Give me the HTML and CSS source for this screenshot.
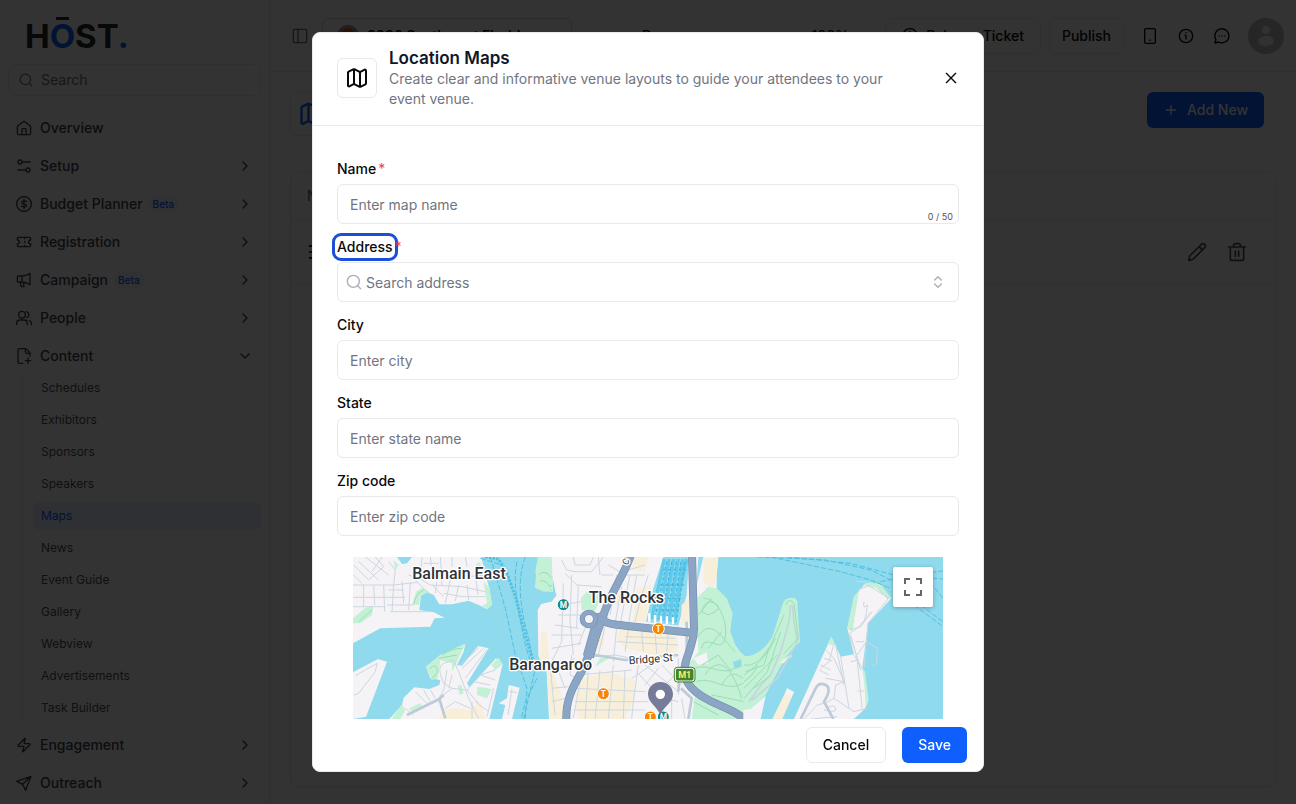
FILE: index.html
```html
<!DOCTYPE html>
<html lang="en">
<head>
    <meta charset="UTF-8">
    <meta name="viewport" content="width=device-width, initial-scale=1.0">
    <title>Location Maps</title>
    <link rel="stylesheet" href="styles.css">
</head>
<body>
    <!-- Icon sprite -->
    <svg class="sprite" aria-hidden="true">
        <symbol id="i-search" viewBox="0 0 24 24"><circle cx="11" cy="11" r="9"/><path d="m22 22-4.500-4.500"/></symbol>
        <symbol id="i-home" viewBox="0 0 24 24"><path d="M9 22v-8a1 1 0 0 1 1-1h4a1 1 0 0 1 1 1v8"/><path d="M2 10.500a2 2 0 0 1 .7-1.500l8-6.500a2 2 0 0 1 2.600 0l8 6.500a2 2 0 0 1 .7 1.500V20a2 2 0 0 1-2 2H4a2 2 0 0 1-2-2z"/></symbol>
        <symbol id="i-setup" viewBox="0 0 24 24"><circle cx="6" cy="6" r="3"/><path d="M9 6h12"/><circle cx="18" cy="18" r="3"/><path d="M3 18h12"/></symbol>
        <symbol id="i-dollar" viewBox="0 0 24 24"><circle cx="12" cy="12" r="11"/><path d="M16 8.500c-1-1.200-7-2-7.500 1-.4 3 7 2 7.300 5 .3 3-6.800 2.500-8 .5M12 5v14"/></symbol>
        <symbol id="i-ticket" viewBox="0 0 24 24"><path d="M2 9a3 3 0 0 1 0 6v2a2 2 0 0 0 2 2h16a2 2 0 0 0 2-2v-2a3 3 0 0 1 0-6V7a2 2 0 0 0-2-2H4a2 2 0 0 0-2 2zM13 5v2M13 17v2M13 11v2"/></symbol>
        <symbol id="i-mega" viewBox="0 0 24 24"><path d="M3 6h6c4 0 8-1.500 12-4v17c-4-2.500-8-4-12-4H3a1 1 0 0 1-1-1V7a1 1 0 0 1 1-1zM9 6v9M6 15l2 7h4l-1-6"/></symbol>
        <symbol id="i-users" viewBox="0 0 24 24"><path d="M17 22v-2a5 5 0 0 0-5-5H6a5 5 0 0 0-5 5v2"/><circle cx="9" cy="7" r="5"/><path d="M23 22v-2a5 5 0 0 0-3-4.500M16 2.300a5 5 0 0 1 0 9.400"/></symbol>
        <symbol id="i-file" viewBox="0 0 24 24"><path d="M10 23H5a2 2 0 0 1-2-2V3a2 2 0 0 1 2-2h10l6 6v5M14 1v5a2 2 0 0 0 2 2h5M14 19h8M18 15v8"/></symbol>
        <symbol id="i-bolt" viewBox="0 0 24 24"><path d="M4 14a1 1 0 0 1-.8-1.600l10-10.200a.5.5 0 0 1 .9.500L12 9a1 1 0 0 0 1 1h7a1 1 0 0 1 .8 1.600l-10 10.200a.5.5 0 0 1-.9-.5L12 15a1 1 0 0 0-1-1z"/></symbol>
        <symbol id="i-send" viewBox="0 0 24 24"><path d="M22.500 2 1 9.500l9 4.500 4.500 9zM22.500 2 10 14"/></symbol>
        <symbol id="i-right" viewBox="0 0 24 24"><path d="m9 18 6-6-6-6"/></symbol>
        <symbol id="i-down" viewBox="0 0 24 24"><path d="m6 9 6 6 6-6"/></symbol>
        <symbol id="i-updown" viewBox="0 0 24 24"><path d="m7 15 5 5 5-5M7 9l5-5 5 5"/></symbol>
        <symbol id="i-panel" viewBox="0 0 24 24"><rect x="2" y="2" width="20" height="20" rx="2"/><path d="M9 2v20"/></symbol>
        <symbol id="i-map" viewBox="0 0 24 24"><path d="M14.100 5.600a2 2 0 0 0 1.800 0l3.700-1.900A1 1 0 0 1 21 4.600v12.800a1 1 0 0 1-.6.900l-4.500 2.300a2 2 0 0 1-1.800 0l-4.200-2.200a2 2 0 0 0-1.800 0l-3.700 1.900A1 1 0 0 1 3 19.400V6.600a1 1 0 0 1 .6-.9l4.500-2.300a2 2 0 0 1 1.800 0zM15 5.800v15M9 3.200v15"/></symbol>
        <symbol id="i-plus" viewBox="0 0 24 24"><path d="M5 12h14M12 5v14"/></symbol>
        <symbol id="i-phone" viewBox="0 0 24 24"><rect x="4" y="1" width="16" height="22" rx="2"/><path d="M12 18v1"/></symbol>
        <symbol id="i-info" viewBox="0 0 24 24"><circle cx="12" cy="12" r="10"/><path d="M10.500 11H12v5.500M12 7v.5"/></symbol>
        <symbol id="i-chat" viewBox="0 0 24 24"><path d="M7 21a10.500 10.500 0 1 0-4.200-4L1.500 22.500zM8 12h.1M12 12h.1M16 12h.1"/></symbol>
        <symbol id="i-pencil" viewBox="0 0 24 24"><path d="M21.200 6.800a1 1 0 0 0-4-4L3.800 16.200a2 2 0 0 0-.5.800L2 21.400a.5.5 0 0 0 .6.600L7 20.700a2 2 0 0 0 .8-.5zM14.500 5.500l4 4"/></symbol>
        <symbol id="i-trash" viewBox="0 0 24 24"><path d="M2 6h20M4 6v14a2 2 0 0 0 2 2h12a2 2 0 0 0 2-2V6M8 6V4a2 2 0 0 1 2-2h4a2 2 0 0 1 2 2v2M10 11v6M14 11v6"/></symbol>
        <symbol id="i-lines" viewBox="0 0 24 24"><path d="M3 5h18M3 12h18M3 19h18"/></symbol>
        <symbol id="i-close" viewBox="0 0 24 24"><path d="M5 5l14 14M19 5 5 19"/></symbol>
    </svg>

    <div class="app">
        <aside class="sidebar">
            <a class="logo" href="#">H<span class="logo-o">O</span>ST<span class="logo-dot">.</span></a>
            <div class="side-search">
                <svg class="icon"><use href="#i-search"/></svg>
                <input type="search" placeholder="Search" aria-label="Search">
            </div>
            <nav class="nav">
                <a class="nav-item" href="#"><svg class="icon"><use href="#i-home"/></svg>Overview</a>
                <a class="nav-item" href="#"><svg class="icon"><use href="#i-setup"/></svg>Setup<svg class="icon arrow"><use href="#i-right"/></svg></a>
                <a class="nav-item" href="#"><svg class="icon"><use href="#i-dollar"/></svg>Budget Planner<span class="beta">Beta</span><svg class="icon arrow"><use href="#i-right"/></svg></a>
                <a class="nav-item" href="#"><svg class="icon"><use href="#i-ticket"/></svg>Registration<svg class="icon arrow"><use href="#i-right"/></svg></a>
                <a class="nav-item" href="#"><svg class="icon"><use href="#i-mega"/></svg>Campaign<span class="beta">Beta</span><svg class="icon arrow"><use href="#i-right"/></svg></a>
                <a class="nav-item" href="#"><svg class="icon"><use href="#i-users"/></svg>People<svg class="icon arrow"><use href="#i-right"/></svg></a>
                <a class="nav-item" href="#"><svg class="icon"><use href="#i-file"/></svg>Content<svg class="icon arrow"><use href="#i-down"/></svg></a>
                <div class="subnav">
                    <a href="#">Schedules</a>
                    <a href="#">Exhibitors</a>
                    <a href="#">Sponsors</a>
                    <a href="#">Speakers</a>
                    <a href="#" class="active">Maps</a>
                    <a href="#">News</a>
                    <a href="#">Event Guide</a>
                    <a href="#">Gallery</a>
                    <a href="#">Webview</a>
                    <a href="#">Advertisements</a>
                    <a href="#">Task Builder</a>
                </div>
                <a class="nav-item" href="#"><svg class="icon"><use href="#i-bolt"/></svg>Engagement<svg class="icon arrow"><use href="#i-right"/></svg></a>
                <a class="nav-item" href="#"><svg class="icon"><use href="#i-send"/></svg>Outreach<svg class="icon arrow"><use href="#i-right"/></svg></a>
            </nav>
        </aside>

        <div class="main">
            <header class="topbar">
                <button class="icon-btn muted" aria-label="Toggle sidebar"><svg class="icon"><use href="#i-panel"/></svg></button>
                <button class="event-btn"><span class="event-logo"></span>2026 Southwest Florida</button>
                <div class="progress"><span>Progress</span><span>100%</span></div>
                <button class="btn ticket-btn"><svg class="icon"><use href="#i-dollar"/></svg>Release Ticket</button>
                <button class="btn publish-btn">Publish</button>
                <div class="top-icons">
                    <button class="icon-btn" aria-label="Mobile preview"><svg class="icon"><use href="#i-phone"/></svg></button>
                    <button class="icon-btn" aria-label="Info"><svg class="icon"><use href="#i-info"/></svg></button>
                    <button class="icon-btn" aria-label="Chat"><svg class="icon"><use href="#i-chat"/></svg></button>
                </div>
                <button class="avatar" aria-label="Account">
                    <svg viewBox="0 0 36 36"><circle cx="18" cy="12" r="4"/><ellipse cx="18" cy="23" rx="8" ry="5"/></svg>
                </button>
            </header>

            <main class="content">
                <div class="page-head">
                    <span class="page-icon"><svg class="icon"><use href="#i-map"/></svg></span>
                    <button class="btn btn-primary add-btn"><svg class="icon"><use href="#i-plus"/></svg>Add New</button>
                </div>
                <div class="panel">
                    <table>
                        <thead>
                            <tr><th>Name</th><th></th></tr>
                        </thead>
                        <tbody>
                            <tr>
                                <td><svg class="icon"><use href="#i-lines"/></svg></td>
                                <td>
                                    <div class="actions">
                                        <button class="icon-btn" aria-label="Edit"><svg class="icon"><use href="#i-pencil"/></svg></button>
                                        <button class="icon-btn" aria-label="Delete"><svg class="icon"><use href="#i-trash"/></svg></button>
                                    </div>
                                </td>
                            </tr>
                        </tbody>
                    </table>
                </div>
            </main>
        </div>
    </div>

    <div class="overlay">
        <div class="modal" role="dialog" aria-modal="true" aria-labelledby="modalTitle">
            <div class="modal-header">
                <span class="modal-icon"><svg class="icon"><use href="#i-map"/></svg></span>
                <div class="modal-text">
                    <h2 id="modalTitle">Location Maps</h2>
                    <p>Create clear and informative venue layouts to guide your attendees to your event venue.</p>
                </div>
                <button class="icon-btn" aria-label="Close"><svg class="icon"><use href="#i-close"/></svg></button>
            </div>

            <form class="modal-body" id="mapForm">
                <div class="field">
                    <div class="label-row"><label for="name">Name</label><span class="required">*</span></div>
                    <div class="control">
                        <input type="text" id="name" placeholder="Enter map name" maxlength="50">
                        <span class="counter">0 / 50</span>
                    </div>
                </div>
                <div class="field">
                    <div class="label-row"><label for="address" class="focused">Address</label><span class="required">*</span></div>
                    <div class="control search">
                        <svg class="icon"><use href="#i-search"/></svg>
                        <input type="text" id="address" placeholder="Search address">
                        <svg class="icon"><use href="#i-updown"/></svg>
                    </div>
                </div>
                <div class="field">
                    <div class="label-row"><label for="city">City</label></div>
                    <div class="control"><input type="text" id="city" placeholder="Enter city"></div>
                </div>
                <div class="field">
                    <div class="label-row"><label for="state">State</label></div>
                    <div class="control"><input type="text" id="state" placeholder="Enter state name"></div>
                </div>
                <div class="field">
                    <div class="label-row"><label for="zip">Zip code</label></div>
                    <div class="control"><input type="text" id="zip" placeholder="Enter zip code"></div>
                </div>

                <div class="map">
                    <svg class="map-canvas" viewBox="0 0 1770 486" preserveAspectRatio="xMidYMin slice" role="img" aria-label="Map of Sydney Harbour">
                        <rect width="1770" height="486" fill="#90daee"/>

                        <!-- Balmain and Pyrmont -->
                        <g transform="translate(-3 -6)">
                            <g class="land">
                                <path d="M3 6H135L150 27 165 25 180 6H388L400 60 412 100 420 150 405 163 385 152 350 137 300 148H262L245 120 225 110 207 122 202 165 245 172 278 188 248 190 235 215 85 220 3 265Z"/>
                                <path d="M3 352 78 312 105 320 42 485 3 492Z"/>
                                <path d="M112 492 150 450 155 428 187 397 232 402 262 390 265 375 235 370 222 335 265 300 340 266 335 290 315 330 330 332 378 273 410 280 345 385 352 397 432 310 452 328 412 492Z"/>
                                <path d="M450 492 460 450 440 445 465 430 470 390 503 398 480 492Z"/>
                            </g>
                            <g class="park">
                                <path d="M3 190 40 158 64 154 60 180 25 205 3 205Z"/>
                                <path d="M182 148 192 110 212 98 230 110 207 122 200 150Z"/>
                                <path d="M372 28 385 20 388 45 374 42ZM395 80 412 100 420 150 405 163 390 152 405 145Z"/>
                                <path d="M222 335 265 300 340 266 320 310 300 350 300 325 265 315 258 370 240 375Z"/>
                                <path d="M118 492 150 448 160 465 145 492ZM172 460 205 444 210 455 180 470ZM376 395 420 402 405 430 375 420ZM418 330 440 308 452 328 430 345ZM318 392 328 390 335 415 322 420Z"/>
                                <path d="M553 30 565 6H603V112L575 110 548 98 555 72 550 50Z"/>
                                <path d="M125 15 140 30 130 45Z"/>
                            </g>
                            <path class="sand" d="M270 470 300 458 350 465 385 440 400 492H262Z"/>
                            <g class="street">
                                <path d="M5 30 50 75 95 35 70 6M20 20 80 75M40 6 110 60M3 90H125L195 82M35 90V155M65 90 68 150M95 90 98 170M125 88 120 170M3 155H100M3 127H160M105 150H185M115 170H240M150 80 155 145M175 82 170 165M110 105H155M110 20 130 45 125 90M60 50 90 6M5 60 30 85"/>
                                <path d="M170 60 210 75 235 90 330 95 400 110M210 6 205 60M205 40 180 75M235 6 240 50 265 60M265 6 270 90M295 75 280 145M320 90 310 138M255 80 250 115M345 90 350 135M370 60 378 120M215 25H260M180 65 235 120M275 115 330 125 400 125M340 6 345 35M240 90 275 125M300 6V35M345 65 400 60"/>
                                <path d="M5 420 20 415 70 350 75 325 10 362"/>
                                <path d="M330 340 395 280M325 330 380 278M340 370 405 283M275 325C255 335 265 360 275 385L300 400M275 325 305 315 320 350 350 430 380 492M285 345 275 405 260 430M260 430 300 400 345 405 370 435 380 445M300 360 290 400M345 405 385 360 430 345M370 440 410 470M385 360 430 375M235 405 250 430M190 410 225 445M160 460 185 480M215 405 235 440M425 400 405 485M470 410 495 412M480 400 468 480M365 380 415 390M280 460 310 440 355 460M360 440V492"/>
                            </g>
                            <path class="way" d="M165 480 262 432 280 490M262 432 275 420"/>
                            <g class="park-path">
                                <path d="M562 50Q555 80 575 95T600 105M570 15Q558 45 575 75T600 90M585 20Q570 45 592 70M185 148Q190 115 215 105M20 200 60 165M235 340Q250 325 255 340T240 370M270 300Q300 280 330 280M260 310 315 300"/>
                            </g>
                            <g class="ferry">
                                <path d="M415 6 460 160 490 300 525 400 520 492M495 20C480 80 500 180 520 270L535 320M520 6C490 80 510 180 530 250L545 330M555 370 520 440 508 492M548 350 515 492M385 10 450 30 480 90"/>
                                <path class="ferry-wide" d="M400 6 440 12 465 55 492 130 520 240 548 335"/>
                            </g>
                        </g>

                        <!-- City and The Rocks -->
                        <g transform="translate(576 -6)">
                            <path class="land" d="M120 6H355L325 100 303 200 400 212 425 120 432 6H600V492H12L5 350-8 335-20 300-22 165-12 148 20 138 35 120 25 75 40 25 60 6Z"/>
                            <path class="land" d="M20 6H130V130H35L22 60Z"/>
                            <path class="park" d="M-22 6H15L22 70 10 100 24 112-10 100-30 95ZM108 130 125 110 150 108 165 130 150 170 110 165ZM150 335 165 310 200 305Z"/>
                            <g class="sand">
                                <path d="M-12 230 5 230 15 330 50 420 60 492H15L5 350-15 320ZM275 100 320 90 300 200H262ZM215 110 240 105 230 150 210 150ZM225 215 335 225 400 235 395 290 330 300 240 280 215 250ZM110 370 190 350 270 375 265 440 240 492H100L90 430ZM155 250 180 230 175 270 155 290ZM265 6 310 6 300 50 262 45ZM410 150 432 130 430 210H408Z"/>
                            </g>
                            <path d="M460 6H600V310L570 270 555 230 560 180 540 130 515 105 515 60 520 6 475 6 455 90Z" fill="#90daee"/>
                            <path class="park" d="M455 130 490 95 515 100 545 130 563 175 555 230 575 280 600 303V492H440L450 420 425 370 430 330 460 290Z"/>
                            <path class="land" d="M445 310 485 292 490 325 460 330Z"/>
                            <path class="sand" d="M475 12 520 6 513 80 500 100 475 80Z"/>
                            <path d="M-20 120Q5 100 35 118L20 140-12 145Z" fill="#90daee"/>
                            <path d="M563 322 588 312 590 335 570 342Z" fill="#90daee"/>
                            <g class="street">
                                <path d="M50 15 65 45 90 50H140L175 6M85 6 90 30H135L145 6M60 55 95 90 170 95M55 85 50 260 10 340M80 60 75 200 85 300M100 90 95 220M170 60H205M40 180H110M30 210 100 220M20 240H110M50 150 110 140M190 30 240 60 300 60M195 120 185 200M215 60 195 180M230 95 210 205M255 60 225 210M275 60 250 210M160 6 165 60M300 30 250 45M310 60 290 120 270 200M20 280 110 265"/>
                                <path d="M120 220 100 270M180 215 160 300M215 215 205 320M250 225 240 290M290 225 295 290M330 230 335 295M370 230 365 290M215 260 400 270M240 245 390 250M145 305 210 300 260 310M80 300 75 360 95 370M15 330 30 480M30 320 60 400M0 350 90 310M20 400 70 395M20 440 60 430"/>
                                <path d="M110 330 105 380 85 490M130 345 120 492M165 345 150 492M205 330 190 492M240 345 235 492M100 360 260 345M95 400 300 410M90 440H310M85 465H300M280 330 265 440 260 492M260 370 320 330M275 350 330 410M300 330 400 410M340 410 400 350M380 420V492M400 310 400 420M410 430 420 492M350 330 410 390M340 340 300 390M320 420 400 440"/>
                            </g>
                            <path class="way" d="M150 300 240 315 400 300M400 410 405 350M408 400 440 430 430 492M425 300V200"/>
                            <g class="park-path">
                                <path d="M475 130C520 130 550 200 540 250S480 230 470 280M460 180 500 130M455 250C500 180 530 250 570 290M450 340C500 320 540 380 590 320M455 380C500 360 550 420 600 380M480 360C520 300 560 330 590 430M470 330 520 300 560 350M500 420 600 440M530 390C560 340 575 360 595 370M470 170Q480 130 510 145T490 180ZM490 280 530 230M-20 60Q0 40 20 70M-15 80Q0 70 15 95M445 440 520 480"/>
                            </g>
                            <path class="wharf" d="M358 12 320 192M372 12 340 195M386 12 355 198M400 12 372 200M414 12 388 205M426 12 400 120"/>
                            <path class="wharf-line" d="M365 20 330 190M380 20 350 190M394 20 365 195M408 20 380 200M420 20 394 200M352 45H425M345 90H418M335 130H408M330 165H400"/>
                            <path d="M313 175V200M330 180V203M348 182V205M366 184V207M384 187V208" stroke="#fff" stroke-width="7" fill="none"/>
                            <g class="highway edge">
                                <path d="M258-2C240 60 195 110 172 190L140 280 110 350C80 400 62 440 64 495"/>
                                <path d="M132 192 165 185C185 210 200 207 240 212L440 233"/>
                                <path d="M441 0 447 220C447 280 410 320 420 360 425 400 470 425 500 440S580 470 598 495"/>
                            </g>
                            <path d="M165 180 130 305" stroke="#7690b4" stroke-width="34"/>
                            <g class="highway">
                                <path d="M258-2C240 60 195 110 172 190L140 280 110 350C80 400 62 440 64 495"/>
                                <path d="M132 192 165 185C185 210 200 207 240 212L440 233"/>
                                <path d="M441 0 447 220C447 280 410 320 420 360 425 400 470 425 500 440S580 470 598 495"/>
                            </g>
                            <path d="M165 180 130 305" stroke="#8ba5c5" stroke-width="30"/>
                            <circle cx="132" cy="192" r="20" fill="#f5f3f5" stroke="#7690b4" stroke-width="16"/>
                            <circle cx="132" cy="192" r="20" fill="none" stroke="#8ba5c5" stroke-width="12"/>
                        </g>

                        <!-- Botanic Garden and Potts Point -->
                        <g transform="translate(1173 -6)">
                            <path class="park" d="M-2 303C40 308 70 270 85 245L115 150Q120 128 142 128T160 150L168 260 125 305 85 380 65 420 20 465-2 465Z"/>
                            <path class="land" d="M-2 465 20 462 65 422 50 492H-2ZM150 492 262 245 290 305 330 298 310 220 330 125 365 85 405 88 442 130 372 205 355 340 373 430C370 465 345 475 330 492Z"/>
                            <path class="sand" d="M105 325 135 300 145 302 118 325ZM85 492 130 400 150 412 115 492Z"/>
                            <path class="land" d="M123 415 130 400 150 412 142 425Z"/>
                            <path class="park" d="M310 220 330 125 345 110 338 150 325 230ZM355 90 375 82 410 88 442 130 432 132 400 100ZM262 245 275 270 250 268ZM355 340 363 350 373 430 365 460 362 400Z"/>
                            <g class="street">
                                <path d="M245 285 270 310 300 380 275 390 270 430 330 470 370 460M240 310 265 318M230 330 260 345M225 345 255 360M290 305 315 460M340 320 355 465M330 300 355 340M275 270 300 390M320 320 345 315M340 408H360M335 260H360M370 255 340 300M312 240 345 215 385 170M315 225 350 215 380 172M360 140Q355 165 370 150 365 200 355 205M400 100 432 132 372 205 360 340M340 105 375 92 435 130M320 240 340 310M245 370 300 380M200 492 280 485M270 430Q250 445 220 450L180 492M250 460Q270 445 275 460T240 465M270 265 255 320 230 340M315 235 332 285 350 345"/>
                                <path d="M370 262 400 280 398 325 388 332M335 80H370"/>
                            </g>
                            <path class="way" d="M170 492 215 400Q225 380 245 390T240 440L268 492"/>
                            <path class="boulevard" d="M15 440 55 385 80 360 110 290 135 200 140 150M25 435 100 370 160 260 150 200 145 150"/>
                            <path class="park-path" d="M125 150Q135 125 150 145L163 250 120 295M0 330Q40 340 80 270L120 180M0 360Q60 320 95 250M0 400Q60 340 100 300M0 430 70 350 110 230M5 350 60 330 75 280M0 380Q30 360 40 330M30 400 80 360"/>
                            <path class="ferry" d="M40 6 240 14 380 45 450 80M80 6 290 50 380 75 440 100M130 6 320 25 450 60 597 72M410 80 500 60 597 48M510 150 597 215M530 150 597 200M545 65 597 130"/>
                        </g>

                        <!-- Labels and markers -->
                        <g class="place" text-anchor="middle">
                            <text x="318" y="66">Balmain East</text>
                            <text x="820" y="138">The Rocks</text>
                            <text x="593" y="339">Barangaroo</text>
                        </g>
                        <text class="street-name" x="894" y="317" text-anchor="middle" transform="rotate(-4 894 317)">Bridge St</text>
                        <text class="street-name road-name" x="822" y="26" transform="rotate(-60 822 26)">C</text>
                        <g class="marker" text-anchor="middle">
                            <g fill="#12868c"><circle cx="631" cy="143" r="18"/><circle cx="931" cy="480" r="18"/></g>
                            <g fill="#f98500"><circle cx="916" cy="215" r="18"/><circle cx="751" cy="410" r="18"/><circle cx="892" cy="480" r="18"/></g>
                            <g class="marker-text"><text x="631" y="152">M</text><text x="931" y="488">M</text><text x="916" y="224">T</text><text x="751" y="419">T</text><text x="892" y="488">T</text></g>
                        </g>
                        <rect x="967" y="334" width="56" height="38" rx="7" fill="#438429" stroke="#fff" stroke-width="3"/>
                        <rect x="964" y="331" width="62" height="44" rx="9" fill="none" stroke="#438429" stroke-width="3"/>
                        <text class="shield" x="995" y="363" text-anchor="middle">M1</text>
                        <path d="M922 375C899 375 885 392 885 412 885 438 912 448 922 474 932 448 960 438 960 412 960 392 945 375 922 375Z" fill="#757b98"/>
                        <circle cx="922" cy="412" r="14" fill="#fff"/>
                    </svg>
                    <button type="button" class="fullscreen" aria-label="Toggle fullscreen view">
                        <svg viewBox="0 0 18 18"><path d="M1 6V1h5M12 1h5v5M17 12v5h-5M6 17H1v-5"/></svg>
                    </button>
                </div>
            </form>

            <div class="modal-footer">
                <button class="btn" type="button">Cancel</button>
                <button class="btn btn-primary" type="submit" form="mapForm">Save</button>
            </div>
        </div>
    </div>
</body>
</html>
```
FILE: styles.css
```css
* {
    margin: 0;
    padding: 0;
    box-sizing: border-box;
}

body {
    font-family: Inter, "Liberation Sans", sans-serif;
    font-size: 14px;
    line-height: 20px;
    color: #09090b;
    background: #fff;
    height: 100vh;
    overflow: hidden;
}

a {
    color: inherit;
    text-decoration: none;
}

button,
input {
    font: inherit;
    color: inherit;
}

button {
    background: none;
    border: none;
    cursor: pointer;
}

.sprite {
    display: none;
}

.icon {
    width: 16px;
    height: 16px;
    flex-shrink: 0;
    fill: none;
    stroke: currentColor;
    stroke-width: 2;
    stroke-linecap: round;
    stroke-linejoin: round;
}

.icon-btn {
    display: flex;
    align-items: center;
    justify-content: center;
}

.btn {
    display: flex;
    align-items: center;
    justify-content: center;
    gap: 8px;
    height: 36px;
    padding: 0 16px;
    border: 1px solid #e8e9ec;
    border-radius: 6px;
    font-weight: 500;
    white-space: nowrap;
}

.btn-primary {
    border: none;
    background: #0f5fff;
    color: #fff;
}

.app {
    display: flex;
    height: 100vh;
}

/* Sidebar */
.sidebar {
    width: 270px;
    flex-shrink: 0;
    padding: 0 8px;
    border-right: 1px solid #ececee;
    overflow: hidden;
}

.logo {
    display: block;
    height: 64px;
    padding: 16px 17px;
    font-size: 33px;
    line-height: 40px;
    font-weight: 700;
    color: #26282c;
}

.logo-o {
    position: relative;
    color: #0f5fff;
}

/* macron over the O */
.logo-o::before {
    content: "";
    position: absolute;
    top: 1px;
    left: 6px;
    width: 13px;
    height: 3px;
    background: #26282c;
}

.logo-dot {
    color: #0f5fff;
}

.side-search {
    display: flex;
    align-items: center;
    gap: 8px;
    height: 32px;
    padding: 0 10px;
    border: 1px solid #ececee;
    border-radius: 6px;
    color: #71717a;
}

.side-search .icon {
    width: 14px;
    height: 14px;
}

.side-search input {
    flex: 1;
    min-width: 0;
    border: none;
    outline: none;
    background: none;
}

::placeholder {
    color: #71757f;
    opacity: 1;
}

.nav {
    margin-top: 13px;
}

.nav-item {
    display: flex;
    align-items: center;
    gap: 5px;
    height: 38px;
    padding: 0 8px;
    color: #3f4450;
    font-weight: 500;
}

.nav-item .icon:first-child {
    margin-right: 3px;
}

.nav-item .arrow {
    margin-left: auto;
}

.beta {
    padding: 0 5px;
    border-radius: 8px;
    background: #eff4ff;
    color: #0f5fff;
    font-size: 10px;
    line-height: 16px;
}

.subnav {
    margin: -1px 0 1px 14px;
    padding-left: 10px;
    border-left: 1px solid #ececee;
}

.subnav a {
    display: block;
    padding: 0 8px;
    margin-bottom: 4px;
    border-radius: 6px;
    font-size: 12px;
    line-height: 28px;
    color: #52525b;
}

.subnav a.active {
    background: #e4edff;
    color: #0f5fff;
}

/* Top bar */
.main {
    flex: 1;
    min-width: 0;
    display: flex;
    flex-direction: column;
}

.topbar {
    display: flex;
    align-items: center;
    gap: 8px;
    height: 72px;
    padding: 0 12px 0 22px;
    border-bottom: 1px solid #ececee;
}

.topbar .muted {
    color: #71717a;
}

.event-btn {
    display: flex;
    align-items: center;
    gap: 8px;
    width: 250px;
    height: 36px;
    margin-left: 6px;
    padding: 0 14px;
    border: 1px solid #d4d4d8;
    border-radius: 6px;
    font-weight: 600;
}

.event-logo {
    width: 22px;
    height: 22px;
    border: 3px solid #a1a1aa;
    border-radius: 50%;
    background: #e8532f;
}

.progress {
    flex: 1;
    display: flex;
    justify-content: space-between;
    padding: 0 28px 0 62px;
    font-weight: 500;
}

.publish-btn {
    padding: 0 12px;
}

.top-icons {
    display: flex;
    gap: 20px;
    margin: 0 10px;
}

.avatar {
    width: 36px;
    height: 36px;
    border-radius: 50%;
    background: #bdbdbd;
    fill: #f5f5f5;
}

.avatar svg {
    display: block;
}

/* Page */
.content {
    flex: 1;
    display: flex;
    flex-direction: column;
    gap: 36px;
    padding: 20px 20px 17px;
}

.page-head {
    display: flex;
    align-items: flex-start;
    justify-content: space-between;
    padding-right: 12px;
}

.page-icon {
    display: flex;
    padding: 7px;
    border: 1px solid #ececee;
    border-radius: 6px;
    color: #0f5fff;
}

.page-icon .icon {
    width: 28px;
    height: 28px;
}

.panel {
    flex: 1;
    border: 1px solid #ececee;
    border-radius: 8px;
    box-shadow: 0 1px 2px rgba(0, 0, 0, 0.05);
}

.panel table {
    width: 100%;
    border-collapse: collapse;
}

.panel th {
    height: 46px;
    padding: 0 16px;
    border-bottom: 1px solid #e8e9ec;
    text-align: left;
    font-weight: 500;
    color: #71717a;
}

.panel td {
    height: 65px;
    padding: 0 16px;
    border-bottom: 1px solid #e8e9ec;
}

.panel td .icon {
    display: block;
    width: 20px;
    height: 20px;
}

.actions {
    display: flex;
    justify-content: flex-end;
    gap: 20px;
    padding-right: 12px;
    color: #52525b;
}

.actions .icon {
    stroke-width: 2;
}

/* Modal */
.overlay {
    position: fixed;
    inset: 0;
    display: flex;
    justify-content: center;
    padding: 32px;
    background: rgba(0, 0, 0, 0.8);
}

.modal {
    display: flex;
    flex-direction: column;
    width: 100%;
    max-width: 672px;
    border: 1px solid #e8e9ec;
    border-radius: 8px;
    background: #fff;
    overflow: hidden;
}

.modal-header {
    display: flex;
    align-items: center;
    gap: 12px;
    padding: 14px 24px 16px;
    border-bottom: 1px solid #e8e9ec;
}

.modal-icon {
    display: flex;
    padding: 7px;
    border: 1px solid #e8e9ec;
    border-radius: 6px;
}

.modal-icon .icon {
    width: 24px;
    height: 24px;
}

.modal-text {
    flex: 1;
    padding-right: 32px;
}

.modal-text h2 {
    font-size: 17px;
    line-height: 22px;
    font-weight: 600;
    color: #0f172a;
}

.modal-text p {
    color: #71757f;
}

.modal-body {
    flex: 1;
    min-height: 0;
    display: flex;
    flex-direction: column;
    gap: 12px;
    padding: 32px 24px 0;
    overflow: hidden;
}

.label-row {
    display: flex;
    align-items: center;
    gap: 2px;
    height: 22px;
    margin-bottom: 4px;
}

.label-row label {
    font-weight: 500;
    line-height: 18px;
}

.label-row .focused {
    border-radius: 4px;
    outline: 3px solid #1d4ed8;
    outline-offset: 2px;
}

.required {
    color: #ef4444;
}

.control {
    position: relative;
    display: flex;
    align-items: center;
    gap: 4px;
    height: 40px;
    border: 1px solid #e8e9ec;
    border-radius: 6px;
}

.control input {
    flex: 1;
    min-width: 0;
    height: 38px;
    padding: 0 12px;
    border: none;
    outline: none;
    background: none;
}

.control.search {
    padding: 0 12px 0 8px;
    color: #a9adb5;
}

.control.search input {
    padding: 0;
}

.counter {
    position: absolute;
    right: 5px;
    bottom: 0;
    font-size: 9px;
    line-height: 12px;
    color: #52525b;
}

.map {
    position: relative;
    flex: 1;
    min-height: 0;
    margin: 9px 16px 0;
}

.map-canvas {
    display: block;
    width: 100%;
    height: 100%;
    fill: none;
}

.land { fill: #f5f3f5; }
.park { fill: #c3f1d5; }
.sand { fill: #f8efdb; }
.street { stroke: #ccd7e1; stroke-width: 3; }
.way { stroke: #bdcad8; stroke-width: 8; }
.boulevard { stroke: #c4d5dc; stroke-width: 5; }
.park-path { stroke: #9ddcb7; stroke-width: 3; }
.ferry { stroke: #52bfe2; stroke-width: 3; stroke-dasharray: 16 6; }
.ferry-wide { stroke-width: 9; stroke-dasharray: 7 4; }
.wharf { stroke: #61caea; stroke-width: 10; }
.wharf-line { stroke: #38b4df; stroke-width: 3; stroke-dasharray: 10 6; }
.highway { stroke: #8ba5c5; stroke-width: 20; }
.highway.edge { stroke: #7690b4; stroke-width: 24; }

.place,
.street-name {
    font-family: Roboto, sans-serif;
    font-size: 48px;
    font-weight: 500;
    fill: #303338;
    stroke: #fff;
    stroke-width: 8;
    stroke-linejoin: round;
    paint-order: stroke;
}

.street-name {
    font-size: 33px;
    font-weight: 400;
}

.road-name {
    font-size: 27px;
}

.marker circle {
    stroke: #fff;
    stroke-width: 3;
}

.marker-text,
.shield {
    font-family: Roboto, sans-serif;
    font-size: 25px;
    font-weight: 700;
    fill: #fff;
}

.shield {
    font-size: 27px;
    fill: #fff06a;
}

.fullscreen {
    position: absolute;
    top: 10px;
    right: 10px;
    display: flex;
    align-items: center;
    justify-content: center;
    width: 40px;
    height: 40px;
    border-radius: 2px;
    background: #fff;
    box-shadow: 0 1px 4px rgba(0, 0, 0, 0.3);
}

.fullscreen svg {
    width: 18px;
    height: 18px;
    fill: none;
    stroke: #666;
    stroke-width: 2;
}

.modal-footer {
    display: flex;
    justify-content: flex-end;
    gap: 16px;
    padding: 8px 16px;
}
```
